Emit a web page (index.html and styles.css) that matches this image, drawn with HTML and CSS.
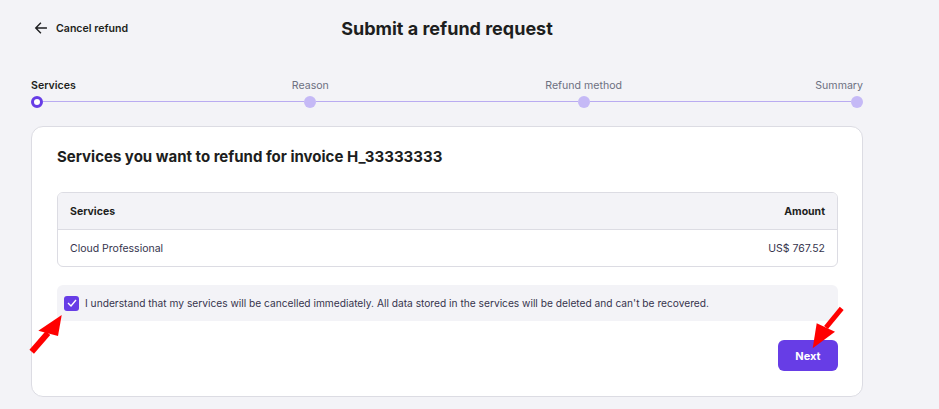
FILE: index.html
```html
<!DOCTYPE html>
<html lang="en">
<head>
    <meta charset="UTF-8">
    <meta name="viewport" content="width=device-width, initial-scale=1.0">
    <title>Submit a refund request</title>
    <link rel="stylesheet" href="styles.css">
</head>
<body>
    <div class="page">
        <header class="top">
            <a class="back" href="#">
                <svg width="14" height="14" viewBox="0 0 24 24" fill="none" stroke="#1d1e20" stroke-width="2.4" stroke-linecap="square">
                    <path d="M21 12H4M11 4l-8 8 8 8"/>
                </svg>
                <span>Cancel refund</span>
            </a>
            <h1>Submit a refund request</h1>
            <div></div>
        </header>

        <div class="steps">
            <div class="step first active">
                <div class="step-label"><span>Services</span></div>
                <div class="dot"></div>
            </div>
            <div class="seg"></div>
            <div class="step">
                <div class="step-label"><span>Reason</span></div>
                <div class="dot"></div>
            </div>
            <div class="seg"></div>
            <div class="step">
                <div class="step-label"><span>Refund method</span></div>
                <div class="dot"></div>
            </div>
            <div class="seg"></div>
            <div class="step last">
                <div class="step-label"><span>Summary</span></div>
                <div class="dot"></div>
            </div>
        </div>

        <div class="card">
            <h2>Services you want to refund for invoice H_33333333</h2>

            <div class="table">
                <div class="row head">
                    <span>Services</span>
                    <span>Amount</span>
                </div>
                <div class="row">
                    <span>Cloud Professional</span>
                    <span>US$ 767.52</span>
                </div>
            </div>

            <label class="agree">
                <span class="check">
                    <svg width="10" height="8" viewBox="0 0 10 8" fill="none" stroke="#fff" stroke-width="1.4">
                        <path d="M1 4l3 3 5-6"/>
                    </svg>
                </span>
                <span>I understand that my services will be cancelled immediately. All data stored in the services will be deleted and can't be recovered.</span>
            </label>

            <div class="actions">
                <button type="button">Next</button>
            </div>
        </div>
    </div>

    <svg class="pointer pointer-check" width="45" height="52" viewBox="0 0 45 52">
        <path d="M6.7 46.7L23 28" stroke="#ff0000" stroke-width="6"/>
        <path d="M36.7 10L13.3 25.7L33 31Z" fill="#ff0000"/>
    </svg>
    <svg class="pointer pointer-next" width="45" height="50" viewBox="0 0 45 50">
        <path d="M36.7 6.3L21 25.5" stroke="#ff0000" stroke-width="5"/>
        <path d="M7.7 46.3L11.7 21.3L30 29.7Z" fill="#ff0000"/>
    </svg>
</body>
</html>
```

FILE: styles.css
```css
body {
    margin: 0;
    background-color: #f3f3f7;
    font-family: Inter, 'Noto Sans', sans-serif;
    color: #1d1e20;
}
.page {
    width: 832px;
    padding: 13px 0 0 31px;
}
.top {
    display: grid;
    grid-template-columns: 1fr auto 1fr;
    align-items: center;
    height: 30px;
}
.back {
    display: flex;
    align-items: center;
    gap: 8px;
    padding-left: 3px;
    color: #1d1e20;
    text-decoration: none;
    font-size: 10.6px;
    font-weight: 600;
}
h1 {
    margin: 0;
    font-size: 18px;
    font-weight: 700;
}
.steps {
    display: flex;
    align-items: flex-end;
    margin-top: 36px;
}
.step {
    display: flex;
    flex-direction: column;
    align-items: center;
    width: 12px;
}
.step-label {
    display: flex;
    justify-content: center;
    width: 12px;
    white-space: nowrap;
    font-size: 10.6px;
    color: #6d7081;
    margin-bottom: 4px;
}
.first .step-label {
    justify-content: flex-start;
}
.last .step-label {
    justify-content: flex-end;
}
.active .step-label {
    color: #1d1e20;
    font-weight: 600;
}
.dot {
    width: 12px;
    height: 12px;
    border-radius: 50%;
    background-color: #c5b9f6;
    box-sizing: border-box;
}
.active .dot {
    background-color: #fff;
    border: 3px solid #673de6;
}
.seg {
    flex: 1;
    height: 1px;
    background-color: #b9abf1;
    margin-bottom: 6px;
}
.card {
    margin-top: 18px;
    background-color: #fff;
    border: 1px solid #dcdce3;
    border-radius: 12px;
    padding: 20px 24px 25px 25px;
}
h2 {
    margin: 0 0 26px;
    font-size: 15px;
    font-weight: 700;
}
.table {
    border: 1px solid #dcdce3;
    border-radius: 6px;
    overflow: hidden;
}
.row {
    display: flex;
    justify-content: space-between;
    align-items: center;
    height: 36px;
    padding: 0 12px;
    font-size: 10.5px;
    color: #36344d;
}
.row.head {
    background-color: #f3f3f7;
    border-bottom: 1px solid #dcdce3;
    font-weight: 700;
    color: #1d1e20;
}
.agree {
    display: flex;
    align-items: center;
    gap: 6px;
    margin-top: 18px;
    height: 36px;
    padding: 0 7px;
    background-color: #f3f3f7;
    border-radius: 6px;
    font-size: 10.2px;
    color: #36344d;
}
.check {
    display: flex;
    align-items: center;
    justify-content: center;
    width: 15px;
    height: 15px;
    border-radius: 3px;
    background-color: #673de6;
}
.actions {
    display: flex;
    justify-content: flex-end;
    margin-top: 19px;
}
button {
    width: 60px;
    height: 31px;
    border: none;
    border-radius: 6px;
    background-color: #673de6;
    color: #fff;
    font-family: inherit;
    font-size: 11px;
    font-weight: 700;
    cursor: pointer;
}
.pointer {
    position: absolute;
}
.pointer-check {
    left: 25px;
    top: 305px;
}
.pointer-next {
    left: 805px;
    top: 302px;
}
```
